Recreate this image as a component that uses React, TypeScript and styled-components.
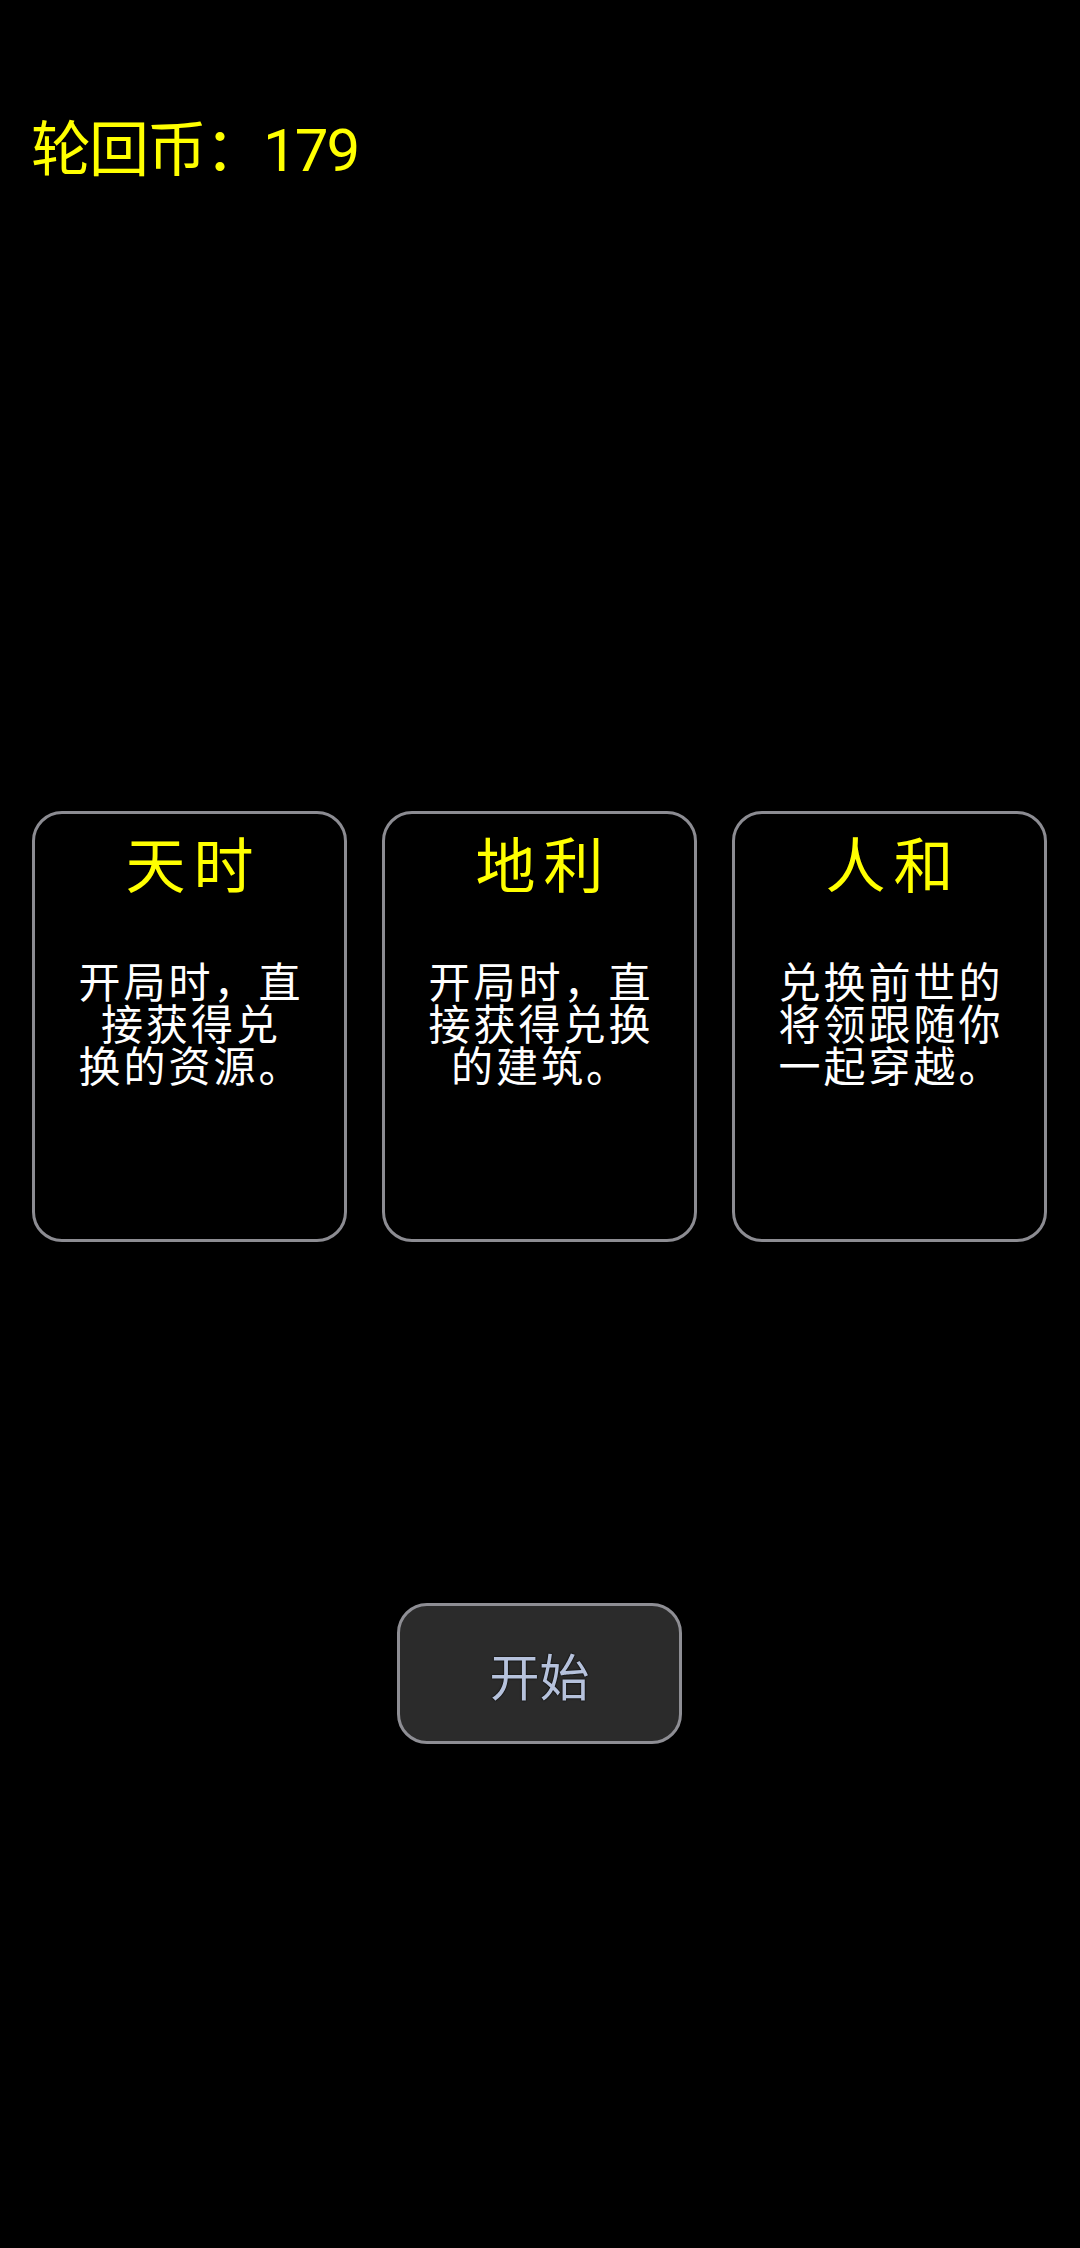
import React from "react";
import styled, { createGlobalStyle } from "styled-components";

const GlobalStyle = createGlobalStyle`
  html, body {
    margin: 0;
    padding: 0;
    background: #000;
  }
  body {
    font-family: Roboto, "Noto Sans CJK SC", sans-serif;
  }
`;

const Page = styled.div`
  display: flex;
  flex-direction: column;
  min-height: 2248px;
  background: #000;
  box-sizing: border-box;
`;

const CoinBar = styled.div`
  margin-top: 121px;
  padding-left: 31px;
  font-size: 60px;
  line-height: 60px;
  letter-spacing: -2px;
  color: #ffff00;
  white-space: nowrap;
`;

const CardRow = styled.div`
  display: grid;
  grid-template-columns: repeat(3, 315px);
  column-gap: 35px;
  margin-top: 630px;
  padding-left: 32px;
`;

const Card = styled.div`
  box-sizing: border-box;
  height: 431px;
  border: 3px solid #8c8c92;
  border-radius: 30px;
  background: #000;
  display: flex;
  flex-direction: column;
  align-items: center;
  padding-top: 18px;
`;

const CardTitle = styled.div`
  font-family: "Noto Sans CJK SC", sans-serif;
  font-size: 60px;
  line-height: 60px;
  letter-spacing: 8px;
  padding-left: 8px;
  color: #ffff00;
`;

const CardDesc = styled.div`
  margin-top: 67px;
  font-family: "Noto Sans CJK SC", sans-serif;
  font-size: 42px;
  line-height: 42px;
  letter-spacing: 3px;
  padding-left: 3px;
  color: #fff;
  text-align: center;
`;

const DescLine = styled.div`
  white-space: nowrap;
`;

const StartRow = styled.div`
  display: flex;
  justify-content: center;
  margin-top: 361px;
`;

const StartButton = styled.button`
  box-sizing: border-box;
  width: 285px;
  height: 141px;
  margin-left: -1px;
  border: 3px solid #8e8e94;
  border-radius: 30px;
  background: #2b2b2b;
  color: #b6c2dc;
  font-family: "Noto Sans CJK SC", sans-serif;
  font-size: 50px;
  display: flex;
  align-items: center;
  justify-content: center;
  padding: 0;
  text-shadow: 0 0 2px #000, 0 0 1px #000;
  cursor: pointer;
`;

type CardItem = {
  title: string;
  lines: string[];
};

const cards: CardItem[] = [
  { title: "天时", lines: ["开局时，直", "接获得兑", "换的资源。"] },
  { title: "地利", lines: ["开局时，直", "接获得兑换", "的建筑。"] },
  { title: "人和", lines: ["兑换前世的", "将领跟随你", "一起穿越。"] },
];

const App = () => {
  return (
    <Page>
      <GlobalStyle />
      <CoinBar>轮回币：179</CoinBar>

      <CardRow>
        {cards.map((c) => (
          <Card key={c.title}>
            <CardTitle>{c.title}</CardTitle>
            <CardDesc>
              {c.lines.map((l, i) => (
                <DescLine key={i}>{l}</DescLine>
              ))}
            </CardDesc>
          </Card>
        ))}
      </CardRow>

      <StartRow>
        <StartButton>开始</StartButton>
      </StartRow>
    </Page>
  );
};

export default App;
